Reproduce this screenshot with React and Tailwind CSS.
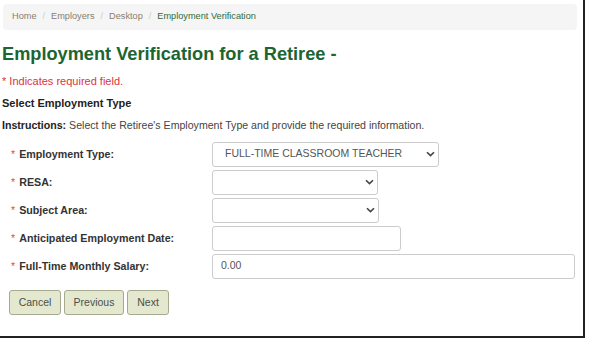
const crumbs = ["Home", "Employers", "Desktop"];

const Chevron = () => (
  <svg width="9" height="6" viewBox="0 0 9 6" className="shrink-0">
    <path d="M1 1.2 L4.5 4.6 L8 1.2" fill="none" stroke="#444" strokeWidth="1.6" />
  </svg>
);

const Field = ({ label, children }) => (
  <div className="flex items-center h-[28px]">
    <div className="w-[212px] pl-[11px] text-[10.7px] font-bold text-[#333]">
      <span className="text-[#d9534f] font-normal mr-[4px]">*</span>
      {label}
    </div>
    {children}
  </div>
);

const SelectBox = ({ width, value }) => (
  <div
    className={`${width} h-[25px] border border-[#ccc] rounded-[3px] bg-white flex items-center justify-between pl-[12px] pr-[3px] text-[10.5px] text-[#555]`}
  >
    <span>{value}</span>
    <Chevron />
  </div>
);

const TextBox = ({ width, value }) => (
  <div
    className={`${width} h-[25px] border border-[#ccc] rounded-[3px] bg-white flex items-center px-[8px] text-[10.5px] text-[#555]`}
  >
    {value}
  </div>
);

const Btn = ({ children, width }) => (
  <button
    className={`${width} h-[25px] bg-[#e3e8cf] border border-[#a6ab90] rounded-[3px] text-[10.5px] text-[#4b4f45]`}
  >
    {children}
  </button>
);

export default function App() {
  return (
    <div
      className="w-[598px] h-[347px] bg-white overflow-hidden"
      style={{ fontFamily: '"Liberation Sans", Arial, sans-serif' }}
    >
      <div className="w-[585px] h-[338px] border-r-2 border-b-2 border-[#222] pt-[4px]">
        <div className="ml-[3px] w-[574px] h-[26px] bg-[#f5f5f5] rounded-[4px] flex items-center pl-[9px] text-[9.2px]">
          {crumbs.map((c) => (
            <span key={c} className="flex items-center">
              <span className="text-[#8a7e6e]">{c}</span>
              <span className="text-[#ccc] mx-[6px]">/</span>
            </span>
          ))}
          <span className="text-[#2f6b3a]">Employment Verification</span>
        </div>

        <h1 className="mt-[13px] ml-[2px] text-[18.2px] leading-[22px] font-bold text-[#1d6530]">
          Employment Verification for a Retiree -
        </h1>

        <p className="mt-[9px] ml-[2px] text-[11px] leading-[14px] text-[#d9343f]">* Indicates required field.</p>
        <p className="mt-[8px] ml-[2px] text-[11px] leading-[14px] font-bold text-[#222]">Select Employment Type</p>
        <p className="mt-[8px] ml-[2px] text-[10.6px] leading-[14px] text-[#444]">
          <span className="font-bold text-[#222]">Instructions:</span> Select the Retiree's Employment
          Type and provide the required information.
        </p>

        <div className="mt-[8px] flex flex-col">
          <Field label="Employment Type:">
            <SelectBox width="w-[227px]" value="FULL-TIME CLASSROOM TEACHER" />
          </Field>
          <Field label="RESA:">
            <SelectBox width="w-[166px]" value="" />
          </Field>
          <Field label="Subject Area:">
            <SelectBox width="w-[167px]" value="" />
          </Field>
          <Field label="Anticipated Employment Date:">
            <TextBox width="w-[189px]" value="" />
          </Field>
          <Field label="Full-Time Monthly Salary:">
            <TextBox width="w-[363px]" value="0.00" />
          </Field>
        </div>

        <div className="mt-[10px] ml-[9px] flex gap-[3px]">
          <Btn width="w-[52px]">Cancel</Btn>
          <Btn width="w-[60px]">Previous</Btn>
          <Btn width="w-[42px]">Next</Btn>
        </div>
      </div>
    </div>
  );
}
